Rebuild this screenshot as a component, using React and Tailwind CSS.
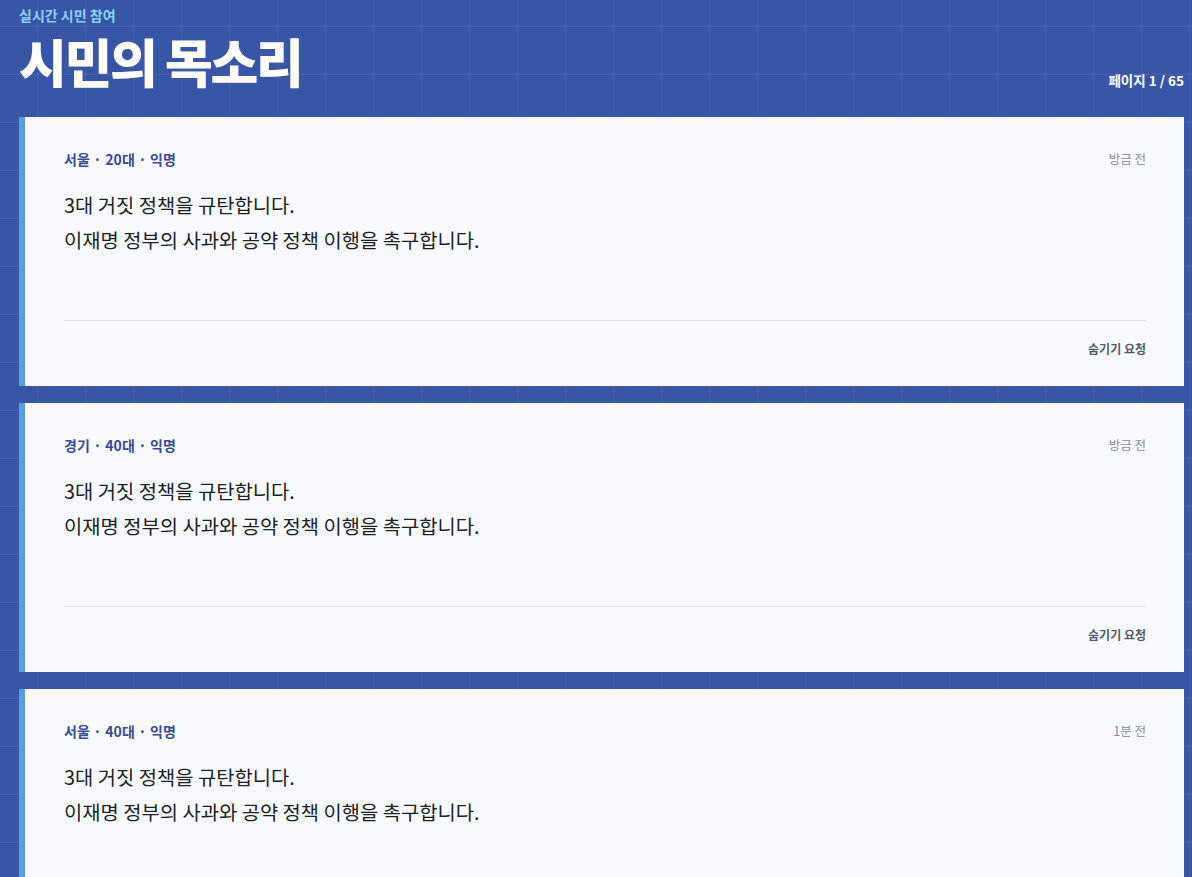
const POSTS = [
  { id: 1, region: '서울', age: '20대', time: '방금 전' },
  { id: 2, region: '경기', age: '40대', time: '방금 전' },
  { id: 3, region: '서울', age: '40대', time: '1분 전' },
];

const BODY = ['3대 거짓 정책을 규탄합니다.', '이재명 정부의 사과와 공약 정책 이행을 촉구합니다.'];

function PostCard({ post }) {
  return (
    <div className="bg-[#f8faff] border-l-[6px] border-[#5b9be0] pl-[39px] pr-[38px] pt-[32px] pb-[27px]">
      <div className="flex items-center justify-between h-[20px]">
        <span className="text-[14px] font-bold text-[#3b4a94] tracking-[0.01em]">
          {post.region} · {post.age} · 익명
        </span>
        <span className="text-[12.5px] text-[#888c96]">{post.time}</span>
      </div>
      <div className="mt-[18px] min-h-[133px] text-[19.85px] leading-[35px] text-[#1c1f26]">
        {BODY.map((line, i) => <p key={i}>{line}</p>)}
      </div>
      <div className="border-t border-[#dfe2e8] pt-[18px] flex justify-end">
        <button className="text-[12px] font-bold text-[#555b66] leading-[20px]">숨기기 요청</button>
      </div>
    </div>
  );
}

export default function App() {
  return (
    <div className="h-screen overflow-hidden bg-[#3756a6] bg-[linear-gradient(rgba(255,255,255,0.07)_1px,transparent_1px),linear-gradient(90deg,rgba(255,255,255,0.07)_1px,transparent_1px)] bg-[size:48px_48px] bg-[position:37px_26px] font-['Noto_Sans_CJK_KR','Noto_Sans',sans-serif] pl-[19px] pr-[8px]">
      {/* Header */}
      <div className="flex items-end justify-between pt-[5px] pb-[24px]">
        <div>
          <p className="text-[14px] font-bold text-[#8ccff7] leading-[20px]">실시간 시민 참여</p>
          <h1 className="text-[52px] font-black text-white leading-[64px] tracking-[-0.045em] mt-[4px]">시민의 목소리</h1>
        </div>
        <span className="text-[13.5px] font-bold text-white mb-[3px]">페이지 1 / 65</span>
      </div>

      <div className="flex flex-col gap-[17px]">
        {POSTS.map(p => <PostCard key={p.id} post={p} />)}
      </div>
    </div>
  );
}
